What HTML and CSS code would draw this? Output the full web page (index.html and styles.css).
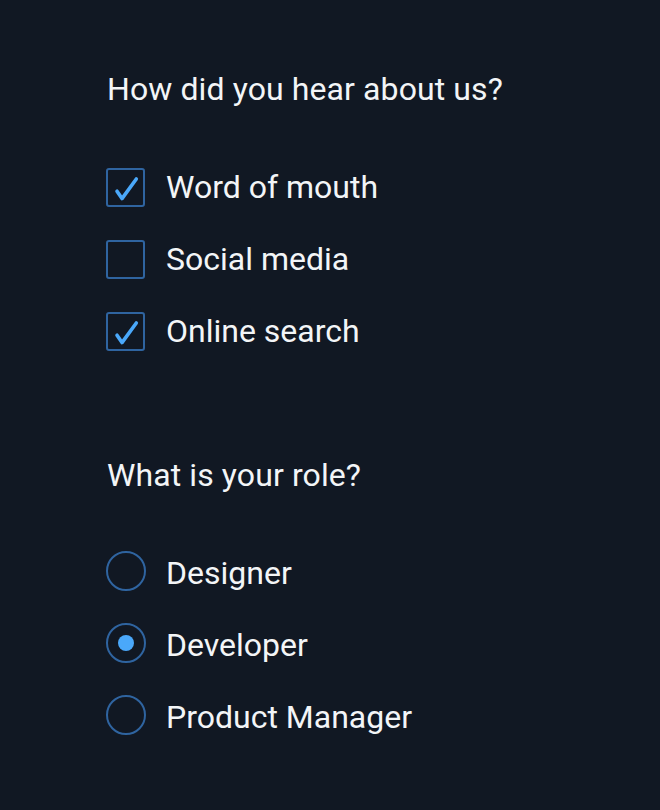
FILE: index.html
```html
<!DOCTYPE html>
<html lang="en">
<head>
<meta charset="utf-8">
<title>Survey</title>
<link rel="stylesheet" href="styles.css">
</head>
<body>
<main class="form">
  <fieldset class="group group-first">
    <legend class="question">How did you hear about us?</legend>
    <div class="options">
      <label class="option">
        <span class="box checked">
          <svg viewBox="0 0 38 38" width="38" height="38"><path d="M10 23.2 L15 30.6 L29.3 11" fill="none" stroke="#4aa8fa" stroke-width="3.6" stroke-linecap="round" stroke-linejoin="round"/></svg>
        </span>
        <span class="label">Word of mouth</span>
      </label>
      <label class="option">
        <span class="box"></span>
        <span class="label">Social media</span>
      </label>
      <label class="option">
        <span class="box checked">
          <svg viewBox="0 0 38 38" width="38" height="38"><path d="M10 23.2 L15 30.6 L29.3 11" fill="none" stroke="#4aa8fa" stroke-width="3.6" stroke-linecap="round" stroke-linejoin="round"/></svg>
        </span>
        <span class="label">Online search</span>
      </label>
    </div>
  </fieldset>
  <fieldset class="group group-second">
    <legend class="question">What is your role?</legend>
    <div class="options">
      <label class="option">
        <span class="radio"></span>
        <span class="label">Designer</span>
      </label>
      <label class="option">
        <span class="radio selected"><span class="dot"></span></span>
        <span class="label">Developer</span>
      </label>
      <label class="option">
        <span class="radio"></span>
        <span class="label">Product Manager</span>
      </label>
    </div>
  </fieldset>
</main>
</body>
</html>
```

FILE: styles.css
```css
html, body {
  margin: 0;
  padding: 0;
  background: #111823;
  height: 100%;
}
body {
  font-family: Roboto, "Liberation Sans", sans-serif;
  color: #f3f5f7;
}
.form {
  padding: 69px 0 0 107px;
  display: flex;
  flex-direction: column;
}
.group {
  border: 0;
  margin: 0;
  padding: 0;
  min-width: 0;
  display: flex;
  flex-direction: column;
}
.question {
  padding: 0;
  font-size: 32px;
  line-height: 40px;
  height: 40px;
  float: left;
  width: 100%;
  letter-spacing: 0.1px;
}
.group-first .options {
  margin-top: 58px;
}
.group-second {
  margin-top: 104px;
}
.group-second .options {
  margin-top: 56px;
}
.options {
  display: flex;
  flex-direction: column;
  gap: 32px;
  clear: both;
}
.option {
  display: flex;
  align-items: center;
  gap: 21px;
  height: 40px;
}
.label {
  font-size: 32px;
  line-height: 40px;
  position: relative;
}
.group-second .label {
  top: 2px;
  left: -1px;
}
.box {
  box-sizing: border-box;
  width: 39px;
  height: 39px;
  border: 2px solid #2f64a0;
  border-radius: 3px;
  display: flex;
  align-items: center;
  justify-content: center;
  margin-left: -1px;
}
.box svg {
  display: block;
  flex: none;
}
.radio {
  box-sizing: border-box;
  width: 40px;
  height: 40px;
  border: 2px solid #2f64a0;
  border-radius: 50%;
  display: flex;
  align-items: center;
  justify-content: center;
  margin-left: -1px;
}
.dot {
  width: 16px;
  height: 16px;
  border-radius: 50%;
  background: #4aa8fa;
}
```
